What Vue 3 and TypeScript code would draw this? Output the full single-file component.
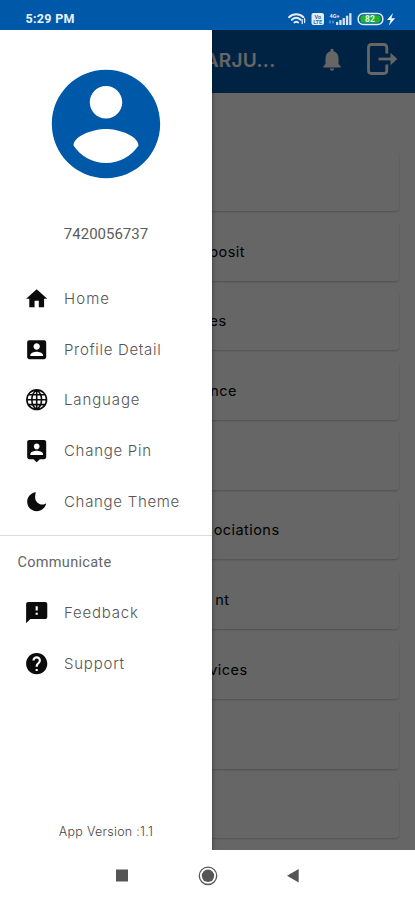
<script setup lang="ts">
interface MenuItem {
  label: string
  icon: string
  spacing: number
  line?: boolean
}

const main: MenuItem[] = [
  { label: 'Home', spacing: 1.1, icon: 'M10 20v-6h4v6h5v-8h3L12 3 2 12h3v8z' },
  {
    label: 'Profile Detail',
    spacing: 0.68,
    icon: 'M3 5v14c0 1.1.89 2 2 2h14c1.1 0 2-.9 2-2V5c0-1.1-.9-2-2-2H5c-1.11 0-2 .9-2 2zm12 4c0 1.66-1.34 3-3 3s-3-1.34-3-3 1.34-3 3-3 3 1.34 3 3zm-9 8c0-2 4-3.1 6-3.1s6 1.1 6 3.1v1H6v-1z',
  },
  {
    label: 'Language',
    spacing: 0.88,
    line: true,
    icon: 'M12 2.700a9.300 9.300 0 1 0 0 18.600 9.300 9.300 0 1 0 0-18.600zM12 2.700v18.600M2.700 12h18.600M4.300 7.300h15.400M4.300 16.700h15.400M12 2.700C5.900 7 5.900 17 12 21.300M12 2.700C18.100 7 18.100 17 12 21.300',
  },
  {
    label: 'Change Pin',
    spacing: 0.72,
    icon: 'M19 2H5c-1.11 0-2 .9-2 2v14c0 1.1.89 2 2 2h4l3 3 3-3h4c1.1 0 2-.9 2-2V4c0-1.1-.9-2-2-2zm-7 3.3c1.49 0 2.7 1.21 2.7 2.7s-1.21 2.7-2.7 2.7S9.3 9.49 9.3 8s1.21-2.7 2.7-2.7zM18 16H6v-.9c0-2 4-3.1 6-3.1s6 1.1 6 3.1v.9z',
  },
  {
    label: 'Change Theme',
    spacing: 0.7,
    icon: 'M11.200 3C6.700 3.400 3 7.300 3 12c0 5 4 9 9 9 4.400 0 8.200-3.200 9-7.600-1 .8-2.300 1.200-3.600 1.200-3.800 0-6.900-3-6.900-6.900 0-1.700.3-3.300.7-4.700z',
  },
]

const communicate: MenuItem[] = [
  {
    label: 'Feedback',
    spacing: 0.78,
    icon: 'M20 2H4c-1.1 0-1.99.9-1.99 2L2 22l4-4h14c1.1 0 2-.9 2-2V4c0-1.1-.9-2-2-2zm-7 12h-2v-2h2v2zm0-4h-2V6h2v4z',
  },
  {
    label: 'Support',
    spacing: 0.78,
    icon: 'M12 2C6.48 2 2 6.48 2 12s4.48 10 10 10 10-4.48 10-10S17.52 2 12 2zm1 17h-2v-2h2v2zm2.07-7.75l-.9.92C13.45 12.9 13 13.5 13 15h-2v-.5c0-1.1.45-2.1 1.17-2.83l1.24-1.26c.37-.36.59-.86.59-1.41 0-1.1-.9-2-2-2s-2 .9-2 2H8c0-2.21 1.79-4 4-4s4 1.79 4 4c0 .88-.36 1.68-.93 2.25z',
  },
]

// Each card's label ends at the given distance from the card's left edge.
const cards: { text: string; end: number }[] = [
  { text: '', end: 0 },
  { text: 'posit', end: 229 },
  { text: 'es', end: 210.5 },
  { text: 'nce', end: 221 },
  { text: '', end: 0 },
  { text: 'ociations', end: 263.5 },
  { text: 'nt', end: 213.5 },
  { text: 'vices', end: 231.5 },
  { text: '', end: 0 },
  { text: '', end: 0 },
]
</script>

<template>
  <div class="phone">
    <header class="status">
      <span class="clock">5:29 PM</span>
      <svg class="indicators" width="112" height="16" viewBox="0 0 112 16">
        <g fill="none" stroke="#e4edf8" stroke-width="1.9" stroke-linecap="round">
          <path d="M2 6.2C6 2.3 12.500 2.300 16.500 6.200" />
          <path d="M4.800 8.800C7.500 6.300 11 6.300 13.700 8.800" />
          <path d="M7.400 11.400C8.600 10.500 10 10.500 11.200 11.400" />
          <path d="M15.200 8.600v4M17.600 7.600v4" stroke-width="1.3" />
        </g>
        <rect x="24.500" y="2" width="12.500" height="12" rx="2" fill="#e4edf8" />
        <text x="30.700" y="7.500" text-anchor="middle" class="volte">Vo</text>
        <text x="30.700" y="12.700" text-anchor="middle" class="volte">LTE</text>
        <text x="42.500" y="6.800" class="net">4G+</text>
        <path d="M43 9.500v3M46 9.500v3" stroke="#7aa6d6" stroke-width="1.200" />
        <g fill="#d5e3f4">
          <rect x="49" y="11" width="2.300" height="3" />
          <rect x="52.300" y="9" width="2.300" height="5" />
          <rect x="55.600" y="7" width="2.300" height="7" />
          <rect x="58.900" y="4.700" width="2.300" height="9.300" />
          <rect x="62.200" y="2.200" width="2.300" height="11.800" />
        </g>
        <rect x="71.200" y="2.600" width="24.600" height="10.800" rx="5" fill="#0058a8" stroke="#e4edf8" stroke-width="1.500" />
        <path d="M76 4.300h14.500q3.200 0 3.200 3.700t-3.200 3.700H76q-2.700 0-2.700-3.700t2.700-3.700z" fill="#1eb52a" />
        <text x="83" y="11.200" text-anchor="middle" class="battery">82</text>
        <path d="M106 2l-6 7h3.600l-1.800 5.500 6.400-7.300h-3.800z" fill="#f1f6fb" />
      </svg>
    </header>

    <div class="screen">
      <div class="appbar">
        <span class="title">ARJU...</span>
        <svg class="bell" width="26" height="27" viewBox="0 0 24 24" fill="#fff" preserveAspectRatio="none">
          <path d="M12 22c1.100 0 2-.9 2-2h-4c0 1.100.89 2 2 2zm6-6v-5c0-3.070-1.640-5.640-4.500-6.320V4c0-.83-.67-1.500-1.500-1.500s-1.500.67-1.500 1.500v.68C7.630 5.360 6 7.920 6 11v5l-2 2v1h16v-1l-2-2z" />
        </svg>
        <svg class="exit" width="32" height="34" viewBox="0 0 32 34" fill="none" stroke="#fff" stroke-width="2.800">
          <path d="M20.800 11.500V5.500q0-3-3-3H5.500q-3 0-3 3v23q0 3 3 3h12.300q3 0 3-3v-6" />
          <path d="M12.500 17h15" />
          <path d="M24.500 10.800l6.800 6.200-6.800 6.200z" fill="#fff" stroke="none" />
        </svg>
      </div>
      <div class="cards">
        <div v-for="(card, i) in cards" :key="i" class="card">
          <span v-if="card.text" class="label" :style="{ width: card.end + 'px' }">{{ card.text }}</span>
        </div>
      </div>

      <div class="scrim"></div>

      <aside class="drawer">
        <svg class="avatar" width="130" height="130" viewBox="0 0 24 24" fill="#0058a8">
          <path d="M12 2C6.480 2 2 6.480 2 12s4.480 10 10 10 10-4.480 10-10S17.520 2 12 2zm0 3c1.660 0 3 1.340 3 3s-1.340 3-3 3-3-1.340-3-3 1.340-3 3-3zm0 14.200c-2.500 0-4.710-1.280-6-3.220.03-1.990 4-3.080 6-3.080 1.990 0 5.970 1.090 6 3.080-1.290 1.940-3.500 3.220-6 3.220z" />
        </svg>
        <div class="number">7420056737</div>
        <nav class="menu">
          <a v-for="item in main" :key="item.label" class="item">
            <svg viewBox="0 0 24 24" :class="{ line: item.line }"><path :d="item.icon" /></svg>
            <span :style="{ letterSpacing: item.spacing + 'px' }">{{ item.label }}</span>
          </a>
        </nav>
        <div class="section">Communicate</div>
        <nav class="menu second">
          <a v-for="item in communicate" :key="item.label" class="item">
            <svg viewBox="0 0 24 24"><path :d="item.icon" /></svg>
            <span :style="{ letterSpacing: item.spacing + 'px' }">{{ item.label }}</span>
          </a>
        </nav>
        <div class="version">App Version :1.1</div>
      </aside>
    </div>

    <footer class="navbar">
      <svg width="415" height="50" viewBox="0 0 415 50" fill="#555">
        <rect x="116" y="19.500" width="12" height="12" />
        <circle cx="208" cy="25.800" r="6.200" />
        <circle cx="208" cy="25.800" r="8.700" fill="none" stroke="#555" stroke-width="1.300" />
        <path d="M287 25.700l11.700-6.700v13.400z" />
      </svg>
    </footer>
  </div>
</template>

<style>
body {
  background: #fff;
}
</style>

<style scoped>
.phone {
  width: 415px;
  height: 900px;
  display: flex;
  flex-direction: column;
  overflow: hidden;
  font-family: Inter, "Open Sans", sans-serif;
}
.status {
  flex: none;
  height: 29.500px;
  box-sizing: border-box;
  display: flex;
  justify-content: space-between;
  padding: 11px 16px 0 25.500px;
  background: #0058a8;
}
.clock {
  font: 700 12.500px/16px Roboto, sans-serif;
  letter-spacing: 0.300px;
  color: #e8f1fa;
}
.net {
  font: 700 5.500px Roboto, sans-serif;
  fill: #e4edf8;
}
.volte {
  font: 700 5.500px Roboto, sans-serif;
  fill: #2f6fb2;
}
.battery {
  font: 700 8.500px Roboto, sans-serif;
  fill: #e8f8e8;
}
.screen {
  position: relative;
  flex: 1;
  overflow: hidden;
  background: #fff;
}
.appbar {
  height: 63.500px;
  box-sizing: border-box;
  display: flex;
  align-items: center;
  padding: 0 17px 4px 0;
  background: #0058a8;
}
.title {
  width: 275.500px;
  padding-top: 2px;
  text-align: right;
  font-size: 19px;
  font-weight: 600;
  letter-spacing: 0.300px;
  color: #fff;
}
.bell {
  margin-left: 43.500px;
}
.exit {
  margin-left: auto;
}
.cards {
  display: flex;
  flex-direction: column;
  gap: 10.700px;
  padding: 59px 16px 0;
}
.card {
  flex: none;
  height: 59px;
  display: flex;
  align-items: center;
  border-radius: 4px;
  background: #fff;
  box-shadow: 0 1px 2px rgba(0, 0, 0, 0.22);
}
.label {
  text-align: right;
  font-size: 14.500px;
  letter-spacing: 0.450px;
  color: #000;
}
.scrim {
  position: absolute;
  inset: 0;
  background: rgba(0, 0, 0, 0.6);
}
.drawer {
  position: absolute;
  inset: 0 auto 0 0;
  width: 212px;
  display: flex;
  flex-direction: column;
  background: #fff;
  box-shadow: 0 0 4px rgba(0, 0, 0, 0.5);
}
.avatar {
  flex: none;
  margin: 29.500px auto 0;
}
.number {
  margin-top: 35px;
  text-align: center;
  font: 400 15px/20px Roboto, sans-serif;
  color: #5c5c5c;
}
.menu {
  margin-top: 29px;
}
.item {
  height: 50.800px;
  display: flex;
  align-items: center;
  padding-left: 24px;
  color: #555;
  font-size: 15px;
  font-weight: 300;
}
.item svg {
  width: 25.400px;
  height: 25.400px;
  margin-right: 14.600px;
  fill: #0b0b0b;
}
.item svg.line {
  fill: none;
  stroke: #0b0b0b;
  stroke-width: 1.500;
}
.section {
  margin-top: 8px;
  padding: 17px 17.500px 0;
  border-top: 1px solid #dcdcdc;
  font: 400 14.500px/20px Roboto, sans-serif;
  letter-spacing: 0.300px;
  color: #666;
}
.second {
  margin-top: 14.500px;
}
.version {
  margin: auto 0 9px;
  text-align: center;
  font-size: 12.500px;
  line-height: 18px;
  font-weight: 300;
  letter-spacing: 0.270px;
  color: #444;
}
.navbar {
  flex: none;
  height: 50px;
  background: #fff;
}
.navbar svg {
  display: block;
}
</style>
